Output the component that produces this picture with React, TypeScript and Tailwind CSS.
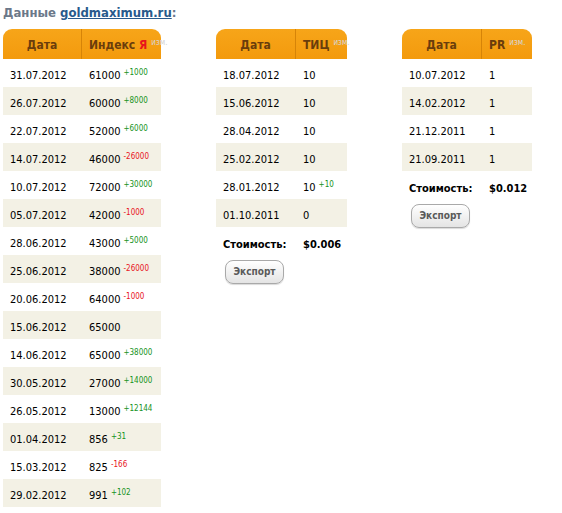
import React from 'react';

type Row = { date: string; value: string; delta?: string };

const yandex: Row[] = [
  { date: '31.07.2012', value: '61000', delta: '+1000' },
  { date: '26.07.2012', value: '60000', delta: '+8000' },
  { date: '22.07.2012', value: '52000', delta: '+6000' },
  { date: '14.07.2012', value: '46000', delta: '-26000' },
  { date: '10.07.2012', value: '72000', delta: '+30000' },
  { date: '05.07.2012', value: '42000', delta: '-1000' },
  { date: '28.06.2012', value: '43000', delta: '+5000' },
  { date: '25.06.2012', value: '38000', delta: '-26000' },
  { date: '20.06.2012', value: '64000', delta: '-1000' },
  { date: '15.06.2012', value: '65000' },
  { date: '14.06.2012', value: '65000', delta: '+38000' },
  { date: '30.05.2012', value: '27000', delta: '+14000' },
  { date: '26.05.2012', value: '13000', delta: '+12144' },
  { date: '01.04.2012', value: '856', delta: '+31' },
  { date: '15.03.2012', value: '825', delta: '-166' },
  { date: '29.02.2012', value: '991', delta: '+102' },
];

const tic: Row[] = [
  { date: '18.07.2012', value: '10' },
  { date: '15.06.2012', value: '10' },
  { date: '28.04.2012', value: '10' },
  { date: '25.02.2012', value: '10' },
  { date: '28.01.2012', value: '10', delta: '+10' },
  { date: '01.10.2011', value: '0' },
];

const pr: Row[] = [
  { date: '10.07.2012', value: '1' },
  { date: '14.02.2012', value: '1' },
  { date: '21.12.2011', value: '1' },
  { date: '21.09.2011', value: '1' },
];

function Delta({ d }: { d?: string }) {
  if (!d) return null;
  return (
    <sup className={`ml-[3px] text-[8px] ${d.startsWith('-') ? 'text-[#e8141c]' : 'text-[#16931c]'}`}>{d}</sup>
  );
}

function DataTable({
  rows,
  title,
  col1,
  col2,
  cost,
}: {
  rows: Row[];
  title: React.ReactNode;
  col1: string;
  col2: string;
  cost?: string;
}) {
  return (
    <div className="flex flex-col">
      <div
        className="grid h-[30px] rounded-t-[9px] bg-gradient-to-b from-[#f7a519] to-[#f39a0c] text-[#6a3d0c] font-bold text-[12px]"
        style={{ gridTemplateColumns: `${col1} ${col2}` }}
      >
        <div className="flex items-center justify-center border-r border-[#d68408] pt-[1px]">Дата</div>
        <div className="flex items-center pl-[7px] pt-[1px]">{title}</div>
      </div>
      {rows.map((r, i) => (
        <div
          key={r.date + i}
          className={`grid h-[28px] items-center pt-[7px] text-[11px] text-black ${i % 2 === 1 ? 'bg-[#f3f1e5]' : 'bg-white'}`}
          style={{ gridTemplateColumns: `${col1} ${col2}` }}
        >
          <div className="pl-[7px]">{r.date}</div>
          <div className="pl-[7px] whitespace-nowrap">
            {r.value}
            <Delta d={r.delta} />
          </div>
        </div>
      ))}
      {cost && (
        <>
          <div
            className="grid h-[31px] items-center pt-[6px] text-[11px] font-bold text-black"
            style={{ gridTemplateColumns: `${col1} ${col2}` }}
          >
            <div className="pl-[7px]">Стоимость:</div>
            <div className="pl-[7px]">{cost}</div>
          </div>
          <div className="pl-[9px]">
            <button className="h-[24px] w-[59px] rounded-[8px] border border-[#a9a9a9] bg-gradient-to-b from-[#ffffff] to-[#e4e4e4] text-[10px] font-bold text-[#5a5a5a] shadow-[0_1px_1px_rgba(0,0,0,0.15)]">
              Экспорт
            </button>
          </div>
        </>
      )}
    </div>
  );
}

function Izm() {
  return <sup className="ml-[4px] text-[8px] font-normal text-[#d4d4d4]">изм.</sup>;
}

export default function App() {
  return (
    <div className="w-[562px] h-[513px] bg-white overflow-hidden pl-[3px] font-['DejaVu_Sans_Condensed','DejaVu_Sans',sans-serif]">
      <div className="h-[29px] pt-[3px] text-[13px] font-bold text-[#6b7889]">
        Данные{' '}
        <a href="#" className="text-[#285a8c] underline">
          goldmaximum.ru
        </a>
        :
      </div>
      <div className="flex items-start gap-[55px]">
        <div className="w-[158px]">
          <DataTable
            rows={yandex}
            col1="79px"
            col2="79px"
            title={
              <span className="whitespace-nowrap">
                Индекс <span className="text-[#e8141c]">Я</span>
                <Izm />
              </span>
            }
          />
        </div>
        <div className="w-[131px]">
          <DataTable
            rows={tic}
            col1="80px"
            col2="51px"
            cost="$0.006"
            title={
              <span className="whitespace-nowrap">
                ТИЦ
                <Izm />
              </span>
            }
          />
        </div>
        <div className="w-[130px]">
          <DataTable
            rows={pr}
            col1="80px"
            col2="50px"
            cost="$0.012"
            title={
              <span className="whitespace-nowrap">
                PR
                <Izm />
              </span>
            }
          />
        </div>
      </div>
    </div>
  );
}
